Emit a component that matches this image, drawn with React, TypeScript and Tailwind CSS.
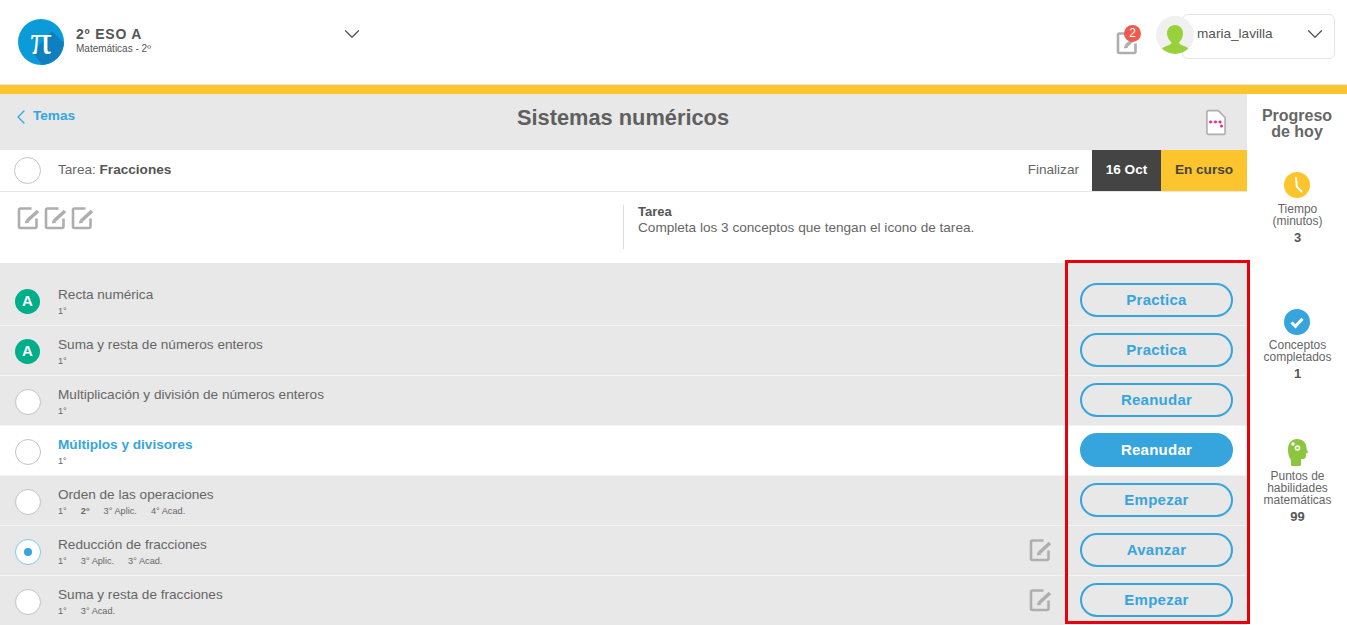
import { ChevronDown, ChevronLeft } from 'lucide-react';

const font = { fontFamily: '"Liberation Sans", Arial, sans-serif' };

function EditIcon({ className }: { className?: string }) {
  return (
    <svg viewBox="0 0 24 24" className={className} fill="none" stroke="#aeaeae">
      <path d="M14.500 2.500H3.500a1.500 1.500 0 0 0-1.500 1.500v16.500a1.500 1.500 0 0 0 1.500 1.500H18a1.500 1.500 0 0 0 1.500-1.500V12.500" strokeWidth="2.600" />
      <path d="M10.500 14.500L21 5" strokeWidth="3.600" />
      <path d="M8.500 17l.8-3.200 2.500 2.400z" fill="#aeaeae" strokeWidth="1" />
    </svg>
  );
}

function Logo() {
  return (
    <div className="relative w-[46px] h-[46px] flex items-center justify-center shrink-0">
      <svg viewBox="0 0 46 46" className="absolute inset-0 w-full h-full">
        <clipPath id="logo-clip">
          <circle cx="23" cy="23" r="23" />
        </clipPath>
        <circle cx="23" cy="23" r="23" fill="#0a9bd8" />
        <path d="M34 12L46 24V46H24L15 33z" fill="#0f7fc0" clipPath="url(#logo-clip)" />
      </svg>
      <span className="relative text-white text-[42px] leading-[46px] -mt-[5px]" style={{ fontFamily: '"Liberation Serif", serif' }}>
        π
      </span>
    </div>
  );
}

function Avatar() {
  return (
    <div className="relative z-10 w-[38px] h-[38px] mt-[2px] rounded-full bg-[#f0f0f0] overflow-hidden shrink-0">
      <svg viewBox="0 0 38 38" className="w-full h-full">
        <path d="M19 9c5 0 8 3.600 8 8.500 0 4-2 7-4 9 0 1.500 2 2.500 5 3.500 2 .7 3.500 1.500 4.500 2.500A18 18 0 0 1 19 38 18 18 0 0 1 6 32.500c1-1 2.500-1.800 4.500-2.500 3-1 5-2 5-3.500-2-2-4.500-5-4.500-9C11 12.600 14 9 19 9z" fill="#97d13c" />
      </svg>
    </div>
  );
}

function FileIcon() {
  return (
    <svg viewBox="0 0 22 28" className="w-[20px] h-[27px]" fill="none">
      <path d="M2.500 1h11L21 8.500V25.500a1.500 1.500 0 0 1-1.500 1.500h-17A1.500 1.500 0 0 1 1 25.500v-23A1.500 1.500 0 0 1 2.500 1z" fill="#fff" stroke="#aeaeae" strokeWidth="1.800" />
      <path d="M5 13.500h10.500l2 4" stroke="#e6a3c4" strokeWidth="0.800" />
      <circle cx="5" cy="13.500" r="1.600" fill="#e8288f" />
      <circle cx="10.500" cy="13.500" r="1.600" fill="#e8288f" />
      <circle cx="15.500" cy="13.500" r="1.600" fill="#e8288f" />
      <circle cx="17" cy="18" r="1.600" fill="#e8288f" />
    </svg>
  );
}

function ClockIcon() {
  return (
    <svg viewBox="0 0 26 26" className="w-[26px] h-[26px]">
      <circle cx="13" cy="13" r="13" fill="#fcc52d" />
      <path d="M12 6l.8 8.500 4.700 5" fill="none" stroke="#fff" strokeWidth="2" strokeLinecap="round" />
    </svg>
  );
}

function CheckIcon() {
  return (
    <svg viewBox="0 0 26 26" className="w-[26px] h-[26px]">
      <circle cx="13" cy="13" r="13" fill="#36a5de" />
      <path d="M7.500 13.500l4 3.800 7-7.600" fill="none" stroke="#fff" strokeWidth="3" />
    </svg>
  );
}

function HeadIcon() {
  return (
    <svg viewBox="0 0 20 27" className="w-[20px] h-[27px]">
      <path d="M9 0c6 0 9.500 4 9.500 9 0 1 .3 1.800 1 3 .6 1 .6 1.600-.2 2l-1.300.6c0 1 .2 2-.2 3.400-.4 1.500-1.600 2-3.300 2h-1.500v5.500a1.500 1.500 0 0 1-1 1.500H4a1 1 0 0 1-1-1v-5C1 18.500 0 15 0 10.500 0 4.500 3.500 0 9 0z" fill="#8cc63f" />
      <circle cx="9.500" cy="9" r="2.800" fill="#fff" />
      <circle cx="9.500" cy="9" r="1.200" fill="#8cc63f" />
      <circle cx="5" cy="5" r="1.700" fill="#fff" />
    </svg>
  );
}

type Status = 'done' | 'empty' | 'active';

interface Concept {
  title: string;
  grades: string[];
  status: Status;
  action: string;
  highlight?: boolean;
  task?: boolean;
  boldGrade?: string;
}

const concepts: Concept[] = [
  { title: 'Recta numérica', grades: ['1°'], status: 'done', action: 'Practica' },
  { title: 'Suma y resta de números enteros', grades: ['1°'], status: 'done', action: 'Practica' },
  { title: 'Multiplicación y división de números enteros', grades: ['1°'], status: 'empty', action: 'Reanudar' },
  { title: 'Múltiplos y divisores', grades: ['1°'], status: 'empty', action: 'Reanudar', highlight: true },
  { title: 'Orden de las operaciones', grades: ['1°', '2°', '3° Aplic.', '4° Acad.'], status: 'empty', action: 'Empezar', boldGrade: '2°' },
  { title: 'Reducción de fracciones', grades: ['1°', '3° Aplic.', '3° Acad.'], status: 'active', action: 'Avanzar', task: true },
  { title: 'Suma y resta de fracciones', grades: ['1°', '3° Acad.'], status: 'empty', action: 'Empezar', task: true },
];

function StatusCircle({ status }: { status: Status }) {
  if (status === 'done') {
    return (
      <div className="w-[25px] h-[25px] rounded-full bg-[#00ae8a] text-white text-[15px] font-bold flex items-center justify-center">
        A
      </div>
    );
  }
  if (status === 'active') {
    return (
      <div className="w-[26px] h-[26px] rounded-full bg-white border border-[#7ccbee] flex items-center justify-center">
        <div className="w-2 h-2 rounded-full bg-[#36a5de]" />
      </div>
    );
  }
  return <div className="w-[26px] h-[26px] rounded-full bg-white border border-[#c4c4c4]" />;
}

function ConceptRow({ concept }: { concept: Concept }) {
  return (
    <div className={`h-[50px] flex items-center border-b border-[#f4f4f4] pl-[15px] pr-[14px] ${concept.highlight ? 'bg-white' : 'bg-[#e8e8e8]'}`}>
      <div className="w-[43px] mt-[2px] shrink-0">
        <StatusCircle status={concept.status} />
      </div>
      <div className="flex-1 mt-[2px]">
        <div className={`text-[13.6px] leading-[18px] ${concept.highlight ? 'font-bold text-[#36a5de]' : 'text-[#666]'}`}>{concept.title}</div>
        <div className="flex gap-[14px] text-[9.2px] leading-[14px] text-[#666]">
          {concept.grades.map((g) => (
            <span key={g} className={g === concept.boldGrade ? 'font-bold' : ''}>{g}</span>
          ))}
        </div>
      </div>
      {concept.task && <EditIcon className="w-6 h-6 mr-[27px] -mt-[1px]" />}
      <button
        className={`w-[153px] h-[34px] -mt-[1px] pt-[1px] rounded-full border-2 border-[#36a5de] text-[15px] tracking-[0.25px] font-bold ${concept.highlight ? 'bg-[#36a5de] text-white' : 'text-[#36a5de]'}`}
      >
        {concept.action}
      </button>
    </div>
  );
}

function StatItem({ icon, label, value, className, labelClass }: { icon: React.ReactNode; label: string[]; value: string; className: string; labelClass: string }) {
  return (
    <div className={`ml-[1px] flex flex-col items-center text-center ${className}`}>
      {icon}
      <div className={`text-[12px] leading-[12px] text-[#666] ${labelClass}`}>
        {label.map((l) => (
          <div key={l}>{l}</div>
        ))}
      </div>
      <div className="mt-[4px] text-[13px] leading-[14px] font-bold text-[#555]">{value}</div>
    </div>
  );
}

export default function App() {
  return (
    <div className="relative w-[1347px] h-[625px] overflow-hidden bg-white" style={font}>
      {/* Header */}
      <header className="h-[85px] flex items-center border-b border-[#e6e6e6] pl-[18px] pr-3">
        <Logo />
        <div className="ml-3 w-[263px] -mt-[6px]">
          <div className="text-[14px] leading-[18px] font-bold text-[#555] tracking-[0.8px]">2º ESO A</div>
          <div className="text-[10px] leading-[10px] mt-[1px] text-[#555]">Matemáticas - 2º</div>
        </div>
        <ChevronDown className="w-[26px] h-[26px] -mt-[17px] text-[#555]" strokeWidth={1.2} />
        <div className="flex-1" />
        <div className="relative mr-[16px] mt-[-1px]">
          <EditIcon className="w-6 h-6 mt-[3px]" />
          <div className="absolute -top-[3px] left-[8px] w-[17px] h-[17px] rounded-full bg-[#ee5a4c] text-white text-[12px] leading-[17px] text-center">
            2
          </div>
        </div>
        <div className="flex items-start -mt-[11px]">
          <Avatar />
          <div className="-ml-[12px] w-[153px] h-[45px] rounded-md border border-[#e4e4e4] bg-white flex items-center justify-between pl-[14px] pr-[6px]">
            <span className="text-[13.6px] text-[#555] -mt-[5px]">maria_lavilla</span>
            <ChevronDown className="w-[26px] h-[26px] -mt-[5px] text-[#555]" strokeWidth={1.2} />
          </div>
        </div>
      </header>
      <div className="h-[9px] bg-[#fcc52d]" />

      <div className="flex">
        {/* Main column */}
        <main className="w-[1247px]">
          <div className="h-[56px] bg-[#e8e8e8] flex items-center pl-[13px] pr-[21px]">
            <div className="flex-1 flex items-center -mt-[11px] text-[#36a5de] text-[13.6px] font-bold">
              <ChevronLeft className="w-6 h-6 -ml-[4px]" strokeWidth={1.3} />
              Temas
            </div>
            <h1 className="text-[21.8px] font-bold text-[#5f5f5f] -mt-[7px] ml-[7px]">Sistemas numéricos</h1>
            <div className="flex-1 flex justify-end">
              <FileIcon />
            </div>
          </div>
          <div className="h-[42px] flex items-center border-b border-[#e6e6e6] pl-[14px]">
            <div className="w-[27px] h-[27px] rounded-full border border-[#c4c4c4]" />
            <div className="ml-[17px] text-[13.6px] text-[#666]">
              Tarea: <span className="font-bold text-[#555]">Fracciones</span>
            </div>
            <div className="flex-1" />
            <span className="text-[13.6px] text-[#666] mr-[13px]">Finalizar</span>
            <div className="w-[69px] h-full bg-[#444] text-white text-[13.6px] font-bold flex items-center justify-center">16 Oct</div>
            <div className="w-[86px] h-full bg-[#fcc52d] text-[#444] text-[13.6px] font-bold flex items-center justify-center">En curso</div>
          </div>
          <div className="h-[71px] flex pl-[17px] pt-[13px]">
            <div className="w-[606px] flex gap-[3px] pt-[1px]">
              <EditIcon className="w-6 h-6" />
              <EditIcon className="w-6 h-6" />
              <EditIcon className="w-6 h-6" />
            </div>
            <div className="h-[44px] border-l border-[#dcdcdc] pl-[14px] text-[13.6px] leading-[16px] text-[#666]">
              <div className="font-bold text-[13px] text-[#555] -mt-[1px]">Tarea</div>
              <div>Completa los 3 conceptos que tengan el icono de tarea.</div>
            </div>
          </div>
          <div className="bg-[#e8e8e8] pt-[13px]">
            {concepts.map((c) => (
              <ConceptRow key={c.title} concept={c} />
            ))}
          </div>
        </main>

        {/* Progress sidebar */}
        <aside className="w-[100px] flex flex-col items-center pt-[14px]">
          <div className="text-[16px] leading-[16px] font-bold text-[#666] text-center">
            Progreso
            <br />
            de hoy
          </div>
          <StatItem className="mt-[32px]" labelClass="mt-[5px]" icon={<ClockIcon />} label={['Tiempo', '(minutos)']} value="3" />
          <StatItem className="mt-[64px]" labelClass="mt-[4px]" icon={<CheckIcon />} label={['Conceptos', 'completados']} value="1" />
          <StatItem className="mt-[58px]" labelClass="mt-[4px]" icon={<HeadIcon />} label={['Puntos de', 'habilidades', 'matemáticas']} value="99" />
        </aside>
      </div>

      {/* Red highlight over the action column */}
      <div className="absolute left-[1065px] top-[260px] w-[185px] h-[364px] border-[3px] border-[#e8000d] pointer-events-none" />
    </div>
  );
}
